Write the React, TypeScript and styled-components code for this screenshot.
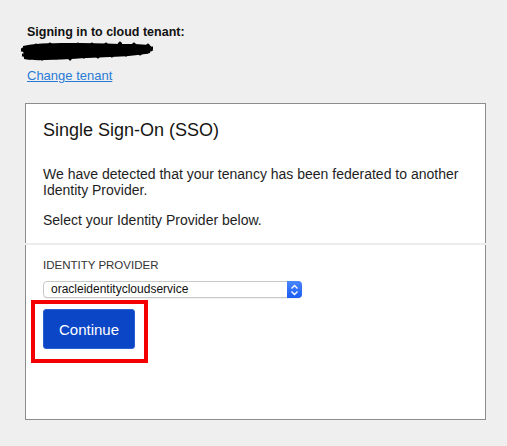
import React from "react";
import styled, { createGlobalStyle } from "styled-components";

const GlobalStyle = createGlobalStyle`
  html, body { margin: 0; padding: 0; }
  body {
    background: #efefef;
    font-family: "Liberation Sans", Arial, Helvetica, sans-serif;
    color: #161513;
  }
`;

const Page = styled.div`
  padding: 24px 0 0 25px;
  width: 461px;
`;

const Header = styled.div`
  padding-left: 2px;
  display: flex;
  flex-direction: column;
  align-items: flex-start;
`;

const HeaderTitle = styled.div`
  font-size: 12.5px;
  font-weight: bold;
  line-height: 16px;
  color: #111;
`;

const Redacted = styled.svg`
  display: block;
  margin: 0 0 0 -7px;
  width: 134px;
  height: 22px;
`;

const ChangeLink = styled.a`
  margin-top: 6px;
  font-size: 13px;
  line-height: 16px;
  color: #2b7bd6;
  text-decoration: underline;
  cursor: pointer;
`;

const Card = styled.div`
  margin-top: 19px;
  background: #fff;
  border: 1px solid #8c8c8c;
  height: 315px;
  display: flex;
  flex-direction: column;
`;

const Section = styled.div<{ $top?: boolean }>`
  padding: ${(p) => (p.$top ? "14px 17px 15px 17px" : "13px 17px 0 17px")};
`;

const Divider = styled.div`
  height: 2px;
  background: #ececec;
  margin: 0 -1px;
`;

const Title = styled.h1`
  margin: 0 0 24px 0;
  font-size: 18px;
  font-weight: normal;
  line-height: 24px;
  color: #161513;
`;

const Paragraph = styled.p`
  margin: 0;
  font-size: 14px;
  line-height: 16px;
  color: #1e1e1e;

  & + & {
    margin-top: 14px;
  }
`;

const Label = styled.div`
  font-size: 11.5px;
  line-height: 14px;
  color: #333;
  text-transform: uppercase;
`;

const FakeSelect = styled.div`
  margin-top: 9px;
  width: 259px;
  height: 17px;
  box-sizing: border-box;
  border: 1px solid #c9c9c9;
  border-radius: 4px;
  background: #fff;
  display: flex;
  align-items: center;
  box-shadow: 0 1px 1px rgba(0, 0, 0, 0.06);
`;

const SelectText = styled.span`
  flex: 1;
  padding-left: 7px;
  font-size: 12px;
  line-height: 15px;
  color: #111;
`;

const Stepper = styled.span`
  width: 15px;
  height: 17px;
  margin: -1px -1px -1px 0;
  border-radius: 0 4px 4px 0;
  background: linear-gradient(#4a86fb, #1c5cf2);
  display: flex;
  align-items: center;
  justify-content: center;
`;

const ButtonWrap = styled.div`
  position: relative;
  display: inline-block;
  margin-top: 11px;
`;

const ContinueButton = styled.button`
  width: 92px;
  height: 40px;
  border: 1px solid #2c5fd0;
  border-radius: 3px;
  background: #0b46c6;
  color: #fff;
  font-family: "Liberation Sans", Arial, sans-serif;
  font-size: 15px;
  cursor: pointer;
  display: block;
`;

const Highlight = styled.div`
  position: absolute;
  left: -12px;
  top: -9px;
  right: -13px;
  bottom: -14px;
  border: 4px solid #f50000;
  pointer-events: none;
`;

export default function App() {
  return (
    <>
      <GlobalStyle />
      <Page>
        <Header>
          <HeaderTitle>Signing in to cloud tenant:</HeaderTitle>
          <Redacted viewBox="0 0 134 22" aria-hidden>
            <path
              d="M3 6 C20 2, 60 3, 100 4 C115 4, 125 4, 131 6 L130 13 C115 17, 80 17, 50 19 C30 20, 12 21, 4 19 Z"
              fill="#000"
            />
            <path
              d="M2 8 L10 18 L16 5 L22 19 L30 4 L36 18 L44 5 L50 19 L58 4 L64 17 L72 4 L78 17 L86 4 L92 16 L100 3 L106 15 L114 4 L120 14 L128 5 L132 11"
              stroke="#000"
              strokeWidth="3"
              fill="none"
              strokeLinejoin="round"
            />
            <path
              d="M1 10 C30 13, 80 10, 133 8 M2 15 C40 17, 90 13, 128 12"
              stroke="#000"
              strokeWidth="3"
              fill="none"
            />
          </Redacted>
          <ChangeLink>Change tenant</ChangeLink>
        </Header>
        <Card>
          <Section $top>
            <Title>Single Sign-On (SSO)</Title>
            <Paragraph>
              We have detected that your tenancy has been federated to another
              Identity Provider.
            </Paragraph>
            <Paragraph>Select your Identity Provider below.</Paragraph>
          </Section>
          <Divider />
          <Section>
            <Label>Identity Provider</Label>
            <FakeSelect>
              <SelectText>oracleidentitycloudservice</SelectText>
              <Stepper>
                <svg width="9" height="12" viewBox="0 0 9 12" aria-hidden>
                  <path d="M1.5 4.5 L4.5 1.5 L7.5 4.5" stroke="#fff" strokeWidth="1.4" fill="none" />
                  <path d="M1.5 7.5 L4.5 10.5 L7.5 7.5" stroke="#fff" strokeWidth="1.4" fill="none" />
                </svg>
              </Stepper>
            </FakeSelect>
            <ButtonWrap>
              <ContinueButton>Continue</ContinueButton>
              <Highlight />
            </ButtonWrap>
          </Section>
        </Card>
      </Page>
    </>
  );
}
